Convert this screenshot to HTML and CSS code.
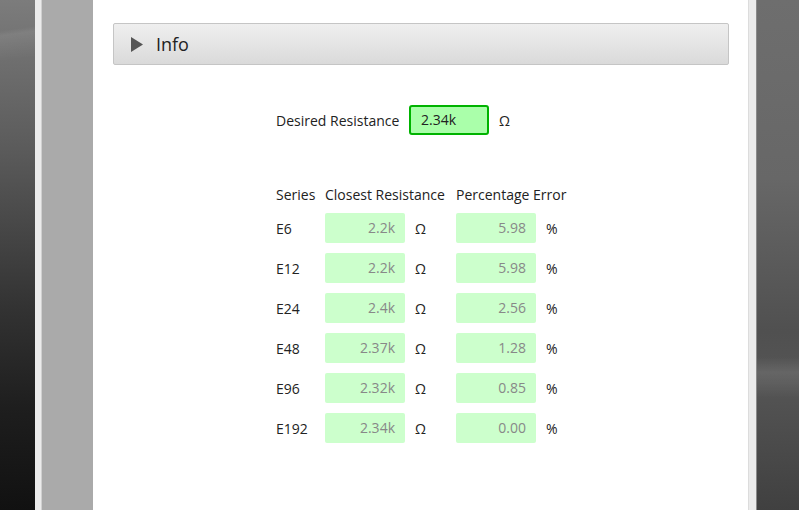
FILE: index.html
```html
<!DOCTYPE html>
<html>
<head>
<meta charset="utf-8">
<link rel="stylesheet" href="styles.css">
</head>
<body>
<div class="bg-left"></div>
<div class="frame">
  <div class="strip"></div>
  <div class="gutter"></div>
  <main class="content">
    <div class="accordion">
      <svg class="arrow" width="12" height="15" viewBox="0 0 12 15"><polygon points="0,0 12,7.5 0,15" fill="#555"/></svg>
      <span class="acc-title">Info</span>
    </div>
    <div class="calc">
      <div class="desired">
        <span class="label">Desired Resistance</span>
        <div class="input">2.34k</div>
        <span class="unit">Ω</span>
      </div>
      <div class="head">
        <span class="h1">Series</span><span class="h2">Closest Resistance</span><span class="h3">Percentage Error</span>
      </div>
      <div class="table">
        <div class="td">E6</div><div class="box">2.2k</div><div class="td u">Ω</div><div class="box">5.98</div><div class="td u">%</div>
        <div class="td">E12</div><div class="box">2.2k</div><div class="td u">Ω</div><div class="box">5.98</div><div class="td u">%</div>
        <div class="td">E24</div><div class="box">2.4k</div><div class="td u">Ω</div><div class="box">2.56</div><div class="td u">%</div>
        <div class="td">E48</div><div class="box">2.37k</div><div class="td u">Ω</div><div class="box">1.28</div><div class="td u">%</div>
        <div class="td">E96</div><div class="box">2.32k</div><div class="td u">Ω</div><div class="box">0.85</div><div class="td u">%</div>
        <div class="td">E192</div><div class="box">2.34k</div><div class="td u">Ω</div><div class="box">0.00</div><div class="td u">%</div>
      </div>
    </div>
  </main>
  <div class="strip strip-r"></div>
</div>
<div class="bg-right"></div>
</body>
</html>
```

FILE: styles.css
```css
html, body {
  margin: 0;
  padding: 0;
  height: 510px;
  overflow: hidden;
}
body {
  display: flex;
  font-family: "Open Sans", "Noto Sans", sans-serif;
  font-size: 14px;
  color: #222;
}
.bg-left {
  width: 35px;
  flex: none;
  background:
    linear-gradient(172deg, rgba(255,255,255,0) 0 6%, rgba(255,255,255,0.08) 7%, rgba(255,255,255,0) 12%),
    linear-gradient(180deg, #7c7c7c 0%, #5a5a5a 30%, #333 60%, #1e1e1e 80%, #111 100%);
}
.bg-right {
  width: 43px;
  flex: none;
  background:
    linear-gradient(180deg, rgba(255,255,255,0) 70%, rgba(255,255,255,0.1) 73%, rgba(255,255,255,0) 78%),
    linear-gradient(180deg, #6e6e6e 0%, #676767 35%, #505050 65%, #555 75%, #404040 100%);
  border-left: 1px solid #8a8a8a;
  box-sizing: border-box;
}
.frame {
  display: flex;
  flex: none;
}
.strip {
  width: 7px;
  background: #ebebeb;
  border-right: 1px solid #d0d0d0;
  box-sizing: border-box;
}
.strip-r {
  width: 8px;
  border-right: none;
  border-left: 1px solid #dcdcdc;
}
.gutter {
  width: 51px;
  background: #aaaaaa;
}
.content {
  width: 655px;
  background: #fff;
  padding: 23px 19px 0 20px;
  box-sizing: border-box;
}
.accordion {
  height: 42px;
  box-sizing: border-box;
  border: 1px solid #c5c5c5;
  border-radius: 2px;
  background: linear-gradient(180deg, #efefef 0%, #dadada 100%);
  display: flex;
  align-items: center;
  padding-left: 17px;
}
.arrow {
  margin-right: 13px;
}
.acc-title {
  font-size: 18px;
  color: #222;
}
.calc {
  padding-left: 163px;
}
.desired {
  margin-top: 40px;
  display: flex;
  align-items: center;
  height: 30px;
}
.label {
  width: 133px;
}
.input {
  width: 80px;
  height: 30px;
  box-sizing: border-box;
  border: 2px solid #00b300;
  border-radius: 3px;
  background: #aaffaa;
  padding-left: 10px;
  line-height: 26px;
}
.unit {
  margin-left: 10px;
}
.head {
  margin-top: 49px;
  height: 20px;
  display: flex;
  align-items: center;
}
.h1 { width: 49px; }
.h2 { width: 131px; }
.table {
  margin-top: 9px;
  display: grid;
  grid-template-columns: 49px 80px 51px 80px auto;
  grid-auto-rows: 30px;
  row-gap: 10px;
  align-items: center;
}
.box {
  height: 30px;
  background: #ccffcc;
  border-radius: 2px;
  color: #888;
  text-align: right;
  padding-right: 10px;
  line-height: 30px;
  box-sizing: border-box;
}
.td.u {
  padding-left: 10px;
}
```
